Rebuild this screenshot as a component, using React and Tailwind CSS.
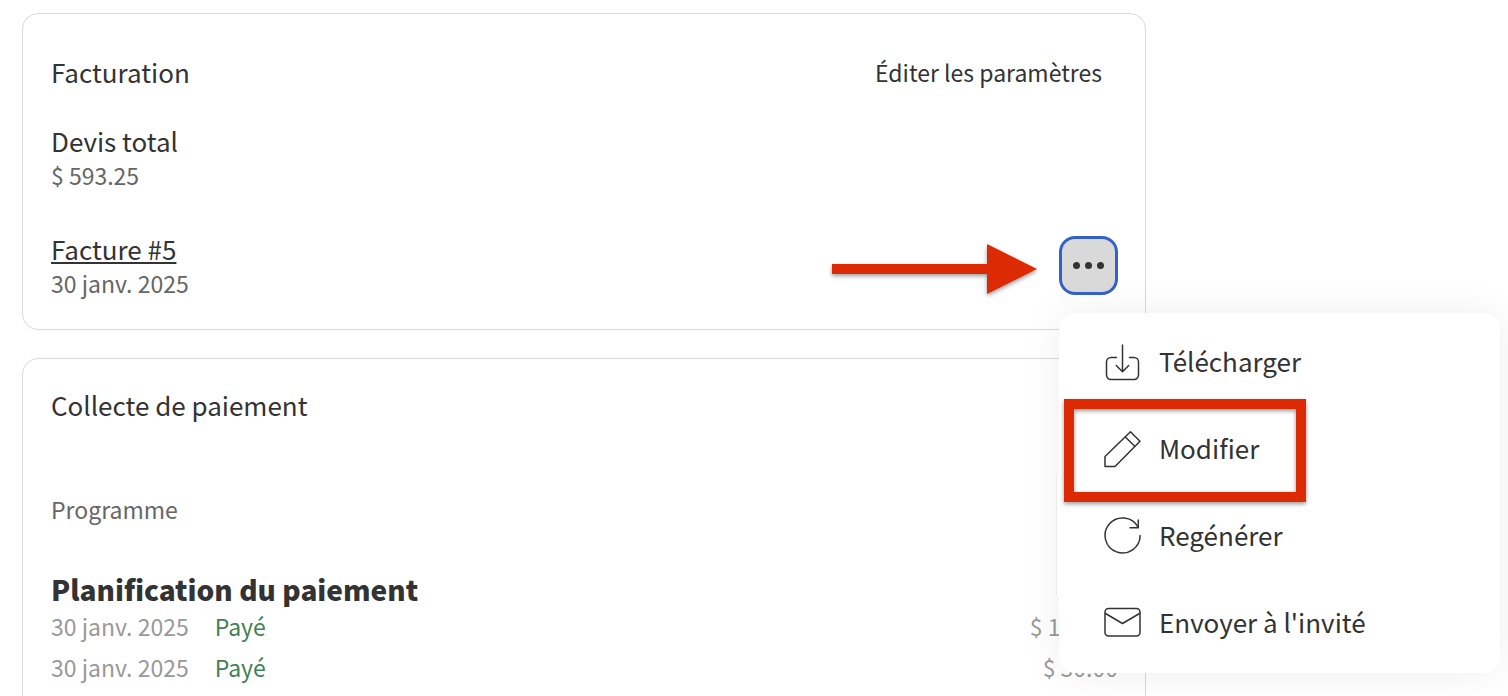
const menuItems = [
  { label: 'Télécharger', icon: DownloadIcon },
  { label: 'Modifier', icon: PencilIcon, highlighted: true },
  { label: 'Regénérer', icon: RefreshIcon },
  { label: "Envoyer à l'invité", icon: MailIcon },
]

const payments = [
  { id: 1, date: '30 janv. 2025', status: 'Payé', amount: '$ 100.00' },
  { id: 2, date: '30 janv. 2025', status: 'Payé', amount: '$ 30.00' },
]

function Icon({ children }) {
  return (
    <svg
      className="size-[38px] shrink-0"
      viewBox="0 0 38 38"
      fill="none"
      stroke="currentColor"
      strokeWidth="1.5"
      strokeLinecap="round"
      strokeLinejoin="round"
      aria-hidden="true"
    >
      {children}
    </svg>
  )
}

function DownloadIcon() {
  return (
    <Icon>
      <path d="M19.5 2v26.5M13.3 22.5l6.2 6.2 6.2-6.2" />
      <path d="M13.5 14.5H8A4.5 4.5 0 0 0 3.5 19v13A4.5 4.5 0 0 0 8 36.5h23a4.5 4.5 0 0 0 4.5-4.5V19a4.5 4.5 0 0 0-4.5-4.5h-4.5" />
    </Icon>
  )
}

function PencilIcon() {
  return (
    <Icon>
      <path d="M27.5 1.8 37 11.2 12 36.5H2v-10z" />
      <path d="m22.3 7 9.5 9.3" />
    </Icon>
  )
}

function RefreshIcon() {
  return (
    <Icon>
      <path d="M37.1 18.5a17.5 17.5 0 1 1-2.2-8.5" />
      <path d="M35.3 3v7.8H27" />
    </Icon>
  )
}

function MailIcon() {
  return (
    <Icon>
      <rect x="2" y="4.5" width="35" height="27.5" rx="3.5" />
      <path d="m2.5 9.5 17 10 17-10" />
    </Icon>
  )
}

function Arrow() {
  return (
    <svg
      className="h-[50px] w-[205px] overflow-visible drop-shadow-[0_2px_2px_rgba(0,0,0,0.4)]"
      viewBox="0 0 205 50"
      fill="#dc2a04"
      aria-hidden="true"
    >
      <path d="M0 20h155V0l50 25-50 25V30H0z" />
    </svg>
  )
}

function ActionsMenu() {
  return (
    <div
      role="menu"
      className="absolute top-[77px] left-0 z-10 w-[441px] rounded-2xl bg-white py-1.5 shadow-[0_0_40px_rgba(0,0,0,0.07)]"
    >
      <span className="absolute top-[161px] -left-0.5 h-[122px] w-2 bg-white shadow-[-1px_0_1px_-1px_rgba(0,0,0,0.3)]" />
      {menuItems.map(({ label, icon: ItemIcon, highlighted }) => (
        <button
          key={label}
          type="button"
          role="menuitem"
          className="relative flex h-[87px] w-full items-center gap-[18px] pl-11 text-left text-[26px] leading-9"
        >
          <ItemIcon />
          <span className="pb-[3px]">{label}</span>
          {highlighted && (
            <span className="absolute -top-[7px] left-[5px] h-[103px] w-[242px] border-10 border-[#dc2a04] drop-shadow-[0_2px_2px_rgba(0,0,0,0.4)]" />
          )}
        </button>
      ))}
    </div>
  )
}

export default function App() {
  return (
    <main className="h-screen overflow-hidden bg-white pt-[13px] pr-[362px] pl-[22px] font-['Noto_Sans_CJK_SC',sans-serif] text-[#333]">
      <div className="space-y-7">
        <section className="rounded-2xl border border-[#dadada] pt-10 pr-[27px] pb-[30px] pl-7">
          <div className="flex items-center justify-between pr-4">
            <h2 className="text-[26px] leading-9">Facturation</h2>
            <a href="#parametres" className="text-[23px] leading-8">Éditer les paramètres</a>
          </div>

          <div className="mt-[33px]">
            <h3 className="text-[26px] leading-9">Devis total</h3>
            <p className="text-[23px] leading-8 text-[#666]">$ 593.25</p>
          </div>

          <div className="mt-10 flex items-center justify-between">
            <div>
              <a href="#facture-5" className="block text-[26px] leading-9 underline decoration-2 underline-offset-2">
                Facture #5
              </a>
              <p className="text-[23px] leading-8 text-[#666]">30 janv. 2025</p>
            </div>
            <div className="flex items-center gap-[22px]">
              <div className="pt-2">
                <Arrow />
              </div>
              <div className="relative">
                <button
                  type="button"
                  aria-label="Actions"
                  aria-haspopup="menu"
                  className="flex size-[59px] items-center justify-center gap-[5px] rounded-2xl border-3 border-[#3460cb] bg-[#d9d9d9]"
                >
                  <span className="size-[7px] rounded-full bg-[#333]" />
                  <span className="size-[7px] rounded-full bg-[#333]" />
                  <span className="size-[7px] rounded-full bg-[#333]" />
                </button>
                <ActionsMenu />
              </div>
            </div>
          </div>
        </section>

        <section className="rounded-2xl border border-[#dadada] pt-7 pr-[27px] pb-10 pl-7">
          <h2 className="text-[26px] leading-9">Collecte de paiement</h2>
          <p className="mt-[70px] text-[23px] leading-8 text-[#666]">Programme</p>

          <h3 className="mt-12 text-[28px] leading-8 font-black">Planification du paiement</h3>
          <table className="w-full text-[23px] leading-8 text-[#999]">
            <tbody>
              {payments.map((payment) => (
                <tr key={payment.id} className="h-[41px]">
                  <td className="w-px pr-[26px] whitespace-nowrap">{payment.date}</td>
                  <td className="text-[#418155]">{payment.status}</td>
                  <td className="text-right">{payment.amount}</td>
                </tr>
              ))}
            </tbody>
          </table>
        </section>
      </div>
    </main>
  )
}
